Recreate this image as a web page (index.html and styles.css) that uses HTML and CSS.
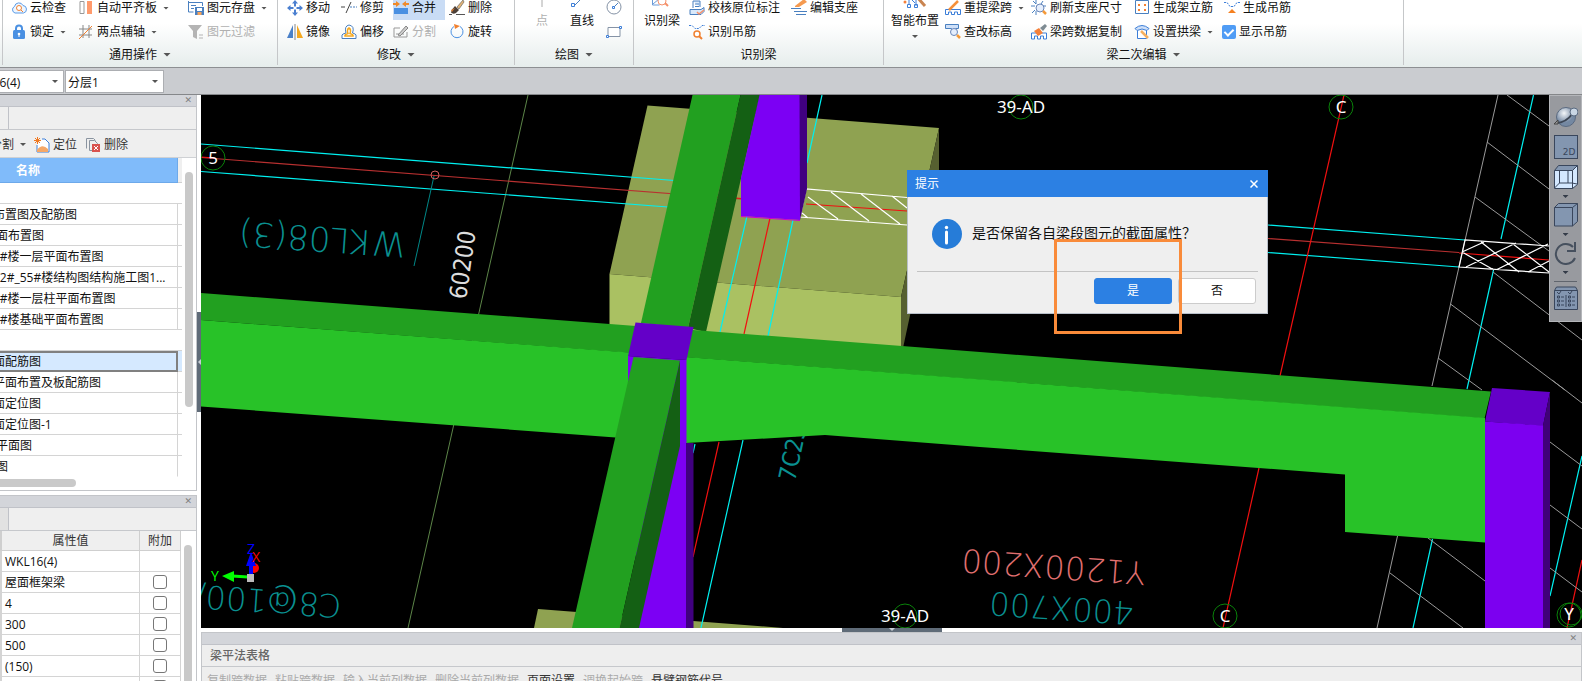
FILE: index.html
```html
<!DOCTYPE html>
<html lang="zh-CN">
<head>
<meta charset="utf-8">
<title>梁二次编辑</title>
<link rel="stylesheet" href="styles.css">
</head>
<body>
<header class="ribbon">
  <section class="group group-common">
    <div class="tools">
      <button class="tool"><svg class="ico" viewBox="0 0 16 16"><path d="M4 13a3.500 3.500 0 0 1-.5-6.500A4.500 4.500 0 0 1 12 5.500a3.800 3.800 0 0 1 .5 7.500z" fill="#eef6ff" stroke="#5b9be6"/><circle cx="8" cy="8" r="2.500" fill="#fff" stroke="#f08030"/><path d="m10 10 2 2" stroke="#f08030"/></svg>云检查</button>
      <button class="tool"><svg class="ico" viewBox="0 0 16 16"><path d="M2 1.500h4v12H2z" fill="#fff" stroke="#999"/><path d="M9 1h5v13H9z" fill="#ff9a6c"/></svg>自动平齐板<i class="caret"></i></button>
      <button class="tool"><svg class="ico" viewBox="0 0 16 16"><path d="M.5 1v11h5M.5 2.500h14V6M3 5.500h5M3 8.500h3" fill="none" stroke="#4a80c0"/><path d="M7 7h9v8H7z" fill="#4a80c0"/><path d="M9 8h5v3H9z" fill="#fff"/><path d="M9.500 12h4v3h-4z" fill="#f5a25a"/></svg>图元存盘<i class="caret"></i></button>
      <button class="tool"><svg class="ico" viewBox="0 0 16 16"><path d="M5 8V4.500a3 3 0 0 1 6 0V8" fill="none" stroke="#4a90e2" stroke-width="2"/><rect x="2" y="6" width="12" height="9" rx="1.500" fill="#4a90e2"/><circle cx="8" cy="10" r="1.300" fill="#fff"/><path d="M8 10v3" stroke="#fff"/></svg>锁定<i class="caret"></i></button>
      <button class="tool"><svg class="ico" viewBox="0 0 16 16"><path d="M1 5h13M1 11h13M5 1v13M11 1v13" stroke="#888"/><path d="m1 15 13-13" stroke="#f08030"/></svg>两点辅轴<i class="caret"></i></button>
      <button class="tool" disabled><svg class="ico" viewBox="0 0 16 16"><path d="M0 1h14L9 7v8l-4-2V7z" fill="#b4b4b4"/><path d="M11 11h4M11 14h4" stroke="#b4b4b4"/></svg>图元过滤</button>
    </div>
    <h2>通用操作<i class="caret wide"></i></h2>
  </section>
  <section class="group group-modify">
    <div class="tools">
      <button class="tool"><svg class="ico" viewBox="0 0 16 16"><path d="m8 0 3 3.500H9v3H7v-3H5zM8 16l3-3.500H9v-3H7v3H5zM0 8l3.500-3v2h3v2h-3v2zM16 8l-3.500-3v2h-3v2h3v2z" fill="#4a7fd0"/></svg>移动</button>
      <button class="tool"><svg class="ico" viewBox="0 0 16 16"><path d="M0 7h4M5 13l5-11" stroke="#444"/><path d="M9 7h2m1 0h2m1 0h1" stroke="#4a80c0"/></svg>修剪</button>
      <button class="tool active"><svg class="ico" viewBox="0 0 16 16"><path d="M1 8h14v6H1z" fill="#4a90e2"/><path d="M0 3h3V1l4 3-4 3V5H0zM16 3h-3V1L9 4l4 3V5h3z" fill="#f08a2a"/></svg>合并</button>
      <button class="tool"><svg class="ico" viewBox="0 0 16 16"><path d="M14 0 8 7l2 2 5-7z" fill="#e2b478" stroke="#555" stroke-width=".6"/><path d="M3 9.500 6 6l4 4-3 3q-3 1.500-5-.5z" fill="#4c4038"/><path d="m2 10 4-2-3 4z" fill="#d67b32"/><path d="M0 14.500h3M7 14.500h9" stroke="#555"/></svg>删除</button>
      <button class="tool"><svg class="ico" viewBox="0 0 16 16"><path d="M6 1v13H0z" fill="#4a80c8"/><path d="M10 1v13h6z" fill="#f5a81e"/><path d="M8 0v16" stroke="#888"/></svg>镜像</button>
      <button class="tool"><svg class="ico" viewBox="0 0 16 16"><path d="M1 14.500V11q0-1 4-2-2-7 3-8 6 1 3.500 8Q15 10 15 11v3.500z" fill="#fff" stroke="#4a80c0"/><path d="M4 12v-1q0-.5 3-1.500-1.500-4 1-5.500 2.500 1.500 1 5.500 3 1 3 1.500v1z" fill="#fff" stroke="#f5a81e" stroke-width="1.500"/></svg>偏移</button>
      <button class="tool" disabled><svg class="ico" viewBox="0 0 16 16"><path d="M1 4v9h13V8M1 4h6M3 10h3m2 0h3" fill="none" stroke="#999"/><path d="m5 11 8-9 2 2-8 8z" fill="#ccc" stroke="#888"/></svg>分割</button>
      <button class="tool"><svg class="ico" viewBox="0 0 16 16"><path d="M5 2.500a6 6 0 1 0 6 0" fill="none" stroke="#4a90e2"/><path d="m5 0 6 2-5 3z" fill="#f08030"/></svg>旋转</button>
    </div>
    <h2>修改<i class="caret wide"></i></h2>
  </section>
  <section class="group group-draw">
    <div class="tools">
      <button class="big" disabled><svg class="bigico" viewBox="0 0 24 24"><path d="M12 4v14" stroke="#aaa"/></svg>点</button>
      <button class="big"><svg class="bigico" viewBox="0 0 24 24"><path d="m5 16 12-12" stroke="#4a80c0"/><path d="M1.500 14.500h3v3h-3z" fill="#fff" stroke="#3c7ed8"/></svg>直线</button>
      <div class="stack">
        <button class="tool" aria-label="圆"><svg class="ico" viewBox="0 0 16 16"><circle cx="8" cy="7" r="7" fill="none" stroke="#8593a6"/><path d="m8 7 4-4" stroke="#4a80c0"/><path d="M6.500 6.500h2v2h-2z" fill="#fff" stroke="#3c7ed8"/></svg></button>
        <button class="tool" aria-label="矩形"><svg class="ico" viewBox="0 0 16 16"><path d="M2 3.500h12v9H2z" fill="#fff" stroke="#8593a6"/><path d="M.5 11.500h2v2h-2zM13.500 2.500h2v2h-2z" fill="#fff" stroke="#3c7ed8"/></svg></button>
      </div>
    </div>
    <h2>绘图<i class="caret wide"></i></h2>
  </section>
  <section class="group group-detect">
    <div class="tools">
      <button class="big"><svg class="bigico" viewBox="0 0 24 24"><path d="M2.500 2v14h7" fill="none" stroke="#6a9ad8"/><path d="m3 15 6-5" stroke="#6a9ad8"/><circle cx="12" cy="12" r="4" fill="#fff" stroke="#f5906a"/><path d="m15 14 3 3" stroke="#f5906a" stroke-width="2"/></svg>识别梁</button>
      <div class="pairs">
        <button class="tool"><svg class="ico" viewBox="0 0 16 16"><path d="M4 1h7v6M4 1v7M6 4h4M6 6.500h4M1 9.500h11l3-2v4l-3 3H1z" fill="#d9e9fb" stroke="#4a80c0"/><path d="m8 12 2 2 5-4" fill="none" stroke="#f5906a" stroke-width="1.500"/></svg>校核原位标注</button>
        <button class="tool"><svg class="ico" viewBox="0 0 16 16"><path d="M0 8.500h10M3 11.500h13M5 14.500h10" stroke="#4a80c0"/><path d="m4 6 9-7 3 3-8 5H4z" fill="#f59a50"/></svg>编辑支座</button>
        <button class="tool"><svg class="ico" viewBox="0 0 16 16"><path d="M0 1.500h3l3 3h4l3-3h3" fill="none" stroke="#3c7ed8" stroke-dasharray="2 1"/><circle cx="8" cy="10" r="3" fill="#fff" stroke="#f08030" stroke-width="1.500"/><path d="m10 12 3 3" stroke="#f08030" stroke-width="2"/></svg>识别吊筋</button>
      </div>
    </div>
    <h2>识别梁</h2>
  </section>
  <section class="group group-beam">
    <div class="tools">
      <button class="big with-caret"><svg class="bigico" viewBox="0 0 24 24"><path d="M6 7v9M13 9v8M4.500 15.500h3v3h-3zM11.500 15.500h3v3h-3zM6 8l6 6" fill="none" stroke="#3c7ed8"/><path d="m14 8 8 9" stroke="#c98450" stroke-width="3"/><circle cx="2" cy="13" r="1.500" fill="#f5803a"/></svg>智能布置<i class="caret"></i></button>
      <div class="pairs">
        <button class="tool"><svg class="ico" viewBox="0 0 16 16"><path d="M.5 14.500V9.500h15v5h-3v-2.500h-3v2.500h-3v-2.500h-3v2.500z" fill="#fff" stroke="#3c7ed8"/><path d="m4 10 9-9" stroke="#f5903a" stroke-width="2.500"/></svg>重提梁跨<i class="caret"></i></button>
        <button class="tool"><svg class="ico" viewBox="0 0 16 16"><path d="M2 1l3 3M12 1l-2 3M0 6h4M1 13l3-3M5 0v4M5 15v-4M12 6h3" stroke="#4a80c0"/><circle cx="9" cy="8" r="4" fill="#e5eefc" stroke="#6a86b8"/><path d="m12 11 3 3" stroke="#f59a3a" stroke-width="2.500"/></svg>刷新支座尺寸</button>
        <button class="tool"><svg class="ico" viewBox="0 0 16 16"><path d="M1.500.5h13v13h-13z" fill="#fff" stroke="#4a80c0"/><path d="M4 4h2v2H4zM10 4h2v2h-2zM4 9h2v2H4zM10 9h2v2h-2z" fill="#f58030"/></svg>生成架立筋</button>
        <button class="tool"><svg class="ico" viewBox="0 0 16 16"><path d="M0 2.500h3l3 4h4l3-4h3" fill="none" stroke="#3c7ed8" stroke-dasharray="2 1"/><path d="m8 9 4 4H4z" fill="#f58020"/></svg>生成吊筋</button>
        <button class="tool"><svg class="ico" viewBox="0 0 16 16"><path d="M.5 0.500h13v4h-3v6l-4-2v-4h-6z" fill="#cfe0f8" stroke="#4a80c0"/><circle cx="9" cy="8" r="3.500" fill="#e5eefc" stroke="#6a86b8"/><path d="m12 11 3 3" stroke="#f59a3a" stroke-width="2.500"/></svg>查改标高</button>
        <button class="tool"><svg class="ico" viewBox="0 0 16 16"><path d="M.5 15v-6h15v6h-3v-3h-3v3h-3v-3h-3v3z" fill="#fff" stroke="#3c7ed8"/><path d="m3 7 5-3 4 5-5 3z" fill="#f5803a"/><path d="m9 4 5-4 2 2-4 5z" fill="#7e8b93"/></svg>梁跨数据复制</button>
        <button class="tool"><svg class="ico" viewBox="0 0 16 16"><path d="M1 4.500q7-6 14 0l-2 2q-5-3-10 0z" fill="#cfe0f8" stroke="#3c7ed8"/><path d="M3.500 7v7.500h9V7" fill="#fff" stroke="#3c7ed8"/><path d="m7 7 7 7" stroke="#f5b060" stroke-width="2.500"/></svg>设置拱梁<i class="caret"></i></button>
        <label class="tool check"><input type="checkbox" checked>显示吊筋</label>
      </div>
    </div>
    <h2>梁二次编辑<i class="caret wide"></i></h2>
  </section>
</header>

<div class="optionbar">
  <span class="combo combo-name"><select aria-label="构件"><option>WKL16(4)</option></select><i class="caret"></i></span>
  <span class="combo combo-layer"><select aria-label="分层"><option>分层1</option></select><i class="caret"></i></span>
</div>

<main class="work">
  <aside class="side">
    <section class="panel drawings">
      <div class="strip"><button aria-label="关闭">✕</button></div>
      <div class="tabrow"><span class="tab"></span></div>
      <div class="panel-tools">
        <button class="cut">分割<i class="caret"></i></button>
        <button><svg class="ico" viewBox="0 0 16 16"><path d="M3 8v7h12V6l-4-4H8" fill="#fff" stroke="#3c7ed8"/><path d="M3 13q5-7 11-1v3H3z" fill="#f5a868"/><path d="M3.500 0v7M0 3.500h7M1 1l5 5M6 1 1 6" stroke="#f07820"/></svg>定位</button>
        <button><svg class="ico" viewBox="0 0 16 16"><path d="M1.500 11.500v-10h7l2 2M4.500 13.500v-10h5l3 3v2M4.500 13.500h3" fill="none" stroke="#8a94a0"/><path d="M7 7h8v8H7z" fill="#d9534f"/><path d="m9 9 4 4m0-4-4 4" stroke="#fff"/></svg>删除</button>
      </div>
      <div class="scrollbox">
        <table class="names">
          <thead><tr><th>名称</th><td></td></tr></thead>
          <tbody>
            <tr class="blank"><td colspan="2"></td></tr>
            <tr><td>布置图及配筋图</td><td></td></tr>
            <tr><td class="in">面布置图</td><td></td></tr>
            <tr><td>4#楼一层平面布置图</td><td></td></tr>
            <tr><td>52#_55#楼结构图结构施工图1...</td><td></td></tr>
            <tr><td>4#楼一层柱平面布置图</td><td></td></tr>
            <tr><td>4#楼基础平面布置图</td><td></td></tr>
            <tr class="blank"><td colspan="2"></td></tr>
            <tr class="selected"><td>面配筋图</td><td></td></tr>
            <tr><td>平面布置及板配筋图</td><td></td></tr>
            <tr><td>面定位图</td><td></td></tr>
            <tr><td>面定位图-1</td><td></td></tr>
            <tr><td class="in">平面图</td><td></td></tr>
            <tr><td class="in">图</td><td></td></tr>
          </tbody>
        </table>
        <div class="vtrack"><i></i></div>
      </div>
      <div class="htrack"><i></i></div>
    </section>
    <section class="panel props">
      <div class="strip"><button aria-label="关闭">✕</button></div>
      <div class="tabrow"><span class="tab gray"></span></div>
      <div class="scrollbox">
        <table class="values">
          <thead><tr><th>属性值</th><th>附加</th></tr></thead>
          <tbody>
            <tr><td>WKL16(4)</td><td></td></tr>
            <tr><td>屋面框架梁</td><td><input type="checkbox" aria-label="附加 屋面框架梁"></td></tr>
            <tr><td>4</td><td><input type="checkbox" aria-label="附加 4"></td></tr>
            <tr><td>300</td><td><input type="checkbox" aria-label="附加 300"></td></tr>
            <tr><td>500</td><td><input type="checkbox" aria-label="附加 500"></td></tr>
            <tr><td>(150)</td><td><input type="checkbox" aria-label="附加 (150)"></td></tr>
            <tr><td></td><td><input type="checkbox" aria-label="附加"></td></tr>
          </tbody>
        </table>
        <div class="vtrack"><i></i></div>
      </div>
    </section>
  </aside>
  <div class="vsplit"><button aria-label="收起"></button></div>
  <div class="center">
    <div class="viewport">
      <svg class="scene" viewBox="201 95 1381 533" preserveAspectRatio="xMinYMin slice">
        <path d="M647.500 105.500 939 128 901 297 609.500 274z" fill="#8fa251"/>
        <path d="M609.500 274 901 297v51l-291.500-20z" fill="#aac162"/>
        <path d="M939 128v52l-36 168h-2v-51z" fill="#566030"/>
        <path d="m538 609 245 19H534z" fill="#8fa251"/>
        <path d="m528 95-120 533" stroke="#5c8548"/>
        <g stroke="#00f0f0" fill="none" stroke-width="1.200">
          <path d="m201 144 480 37M201 171.500l467 35.500M1268 225l197 15M1268 252.500l191 14.500"/>
          <path d="m822 95-15 68M747 216l-27 116M793 220l-25 116M743 440l-42 188M695 444l-2 9"/>
          <path d="m1533.500 95-32.500 144M1493.500 270l-26.500 119M1432.500 539 1413 628M1582 456l-32 140"/>
        </g>
        <g stroke="#b83030" fill="none" stroke-width="1.200"><path d="m201 157.500 540 41.500M1268 238.500l191 14"/></g>
        <g stroke="#f01010" fill="none" stroke-width="1.200">
          <path d="m201 157 14 1M736 198l5 .5M806 204l101 7M770 218l-26 116M719 442l-26 115M1344 95l-64 281M1259 468l-36 160M1459 253l90 7M1582 560l-15 68"/>
        </g>
        <g stroke="#999" fill="none">
          <path d="m1498 95-66 291M1397.500 536 1377 628M1507 95l42 31M1487 142l62 47M1475 197l74 54M1493 272l89 68M1450.500 304 1565 390M1438 358l44 32M1552 380l30 23M1550 442l32 24M1550 505l32 24M1550 568l32 24M1428 538l57 43M1390 573l73 55"/>
        </g>
        <g stroke="#fff" fill="none" stroke-width="1.200">
          <path d="m907 197.500-101-8.500-6 28 107 8M802 213l6 5M808 197l30 22M831 192l38 29M861 194l39 30M892 196l15 12"/>
          <path d="m1549 246-84-6-6 27 90 6M1462 252l32 18M1481 242l38 30M1513 244l36 28M1462 252l22-10M1466 267l50-24M1496 270l52-26M1528 272l21-11"/>
        </g>
        <g class="cad teal">
          <text transform="translate(406 233) rotate(184)">WKL08(3)</text>
          <path d="m434 176-20 90" stroke="#088" fill="none"/>
          <text class="small" transform="translate(342 595) rotate(184)">C8@100/</text>
          <text class="narrow" transform="translate(795 482) rotate(-78)">7C25</text>
          <text class="small" transform="translate(1134 602) rotate(184)">400X700</text>
        </g>
        <text class="cad small pink" transform="translate(1146 562) rotate(184)">Y1200X200</text>
        <text class="cad narrow white" transform="translate(466 300) rotate(-82)">60200</text>
        <path d="M692.500 95h48L688 328l-47-5z" fill="#22a020"/>
        <path d="M740.500 95H760l-54 237-18-4z" fill="#146014"/>
        <path d="M759.500 95H800v125l-59-4v-38z" fill="#7c00f4"/>
        <path d="M799.500 95h7.500v94l-7 31z" fill="#400080"/>
        <path d="m741 216.500 59 4" stroke="#d000d0"/>
        <path d="m201 293 435 33 57.500 4L980 352l511 39.500-6.500 27L201 320z" fill="#22a020"/>
        <path d="m201 320 428 32.500v86L201 406.500zM686 357l799 61v124.500L1345 532v-57.500L980 447l-155-12-139 8z" fill="#28c228"/>
        <path d="m635.500 322.500 58 4.500-7 33-58.500-4z" fill="#6400c8"/>
        <path d="M628 356l58.500 4v268H639l-11-240z" fill="#7c00f4"/>
        <path d="M686 443h7.500v185H686z" fill="#400080"/>
        <path d="m633.500 357 46.500 3.500-60.500 267.500H572z" fill="#22a020"/>
        <path d="M680 360.500V446l-41 182h-19.500z" fill="#146014"/>
        <path d="m1492 388 58 4-7 34-58-4.500z" fill="#6400c8"/>
        <path d="m1485 421.500 58 4V628h-58z" fill="#7c00f0"/>
        <path d="M1550 392v236h-7V425.500z" fill="#400078"/>
        <circle cx="435" cy="175" r="4" fill="none" stroke="#d06060"/>
        <g fill="none" stroke="#0a820a">
          <circle cx="213" cy="158" r="12"/><circle cx="1021" cy="107" r="12"/><circle cx="1341" cy="107" r="12"/><circle cx="905" cy="616" r="12"/><circle cx="1225" cy="616" r="12"/><circle cx="1569" cy="615" r="12"/><circle cx="1571" cy="614" r="11"/>
        </g>
        <g class="axis">
          <text x="213" y="164">5</text><text x="1021" y="113">39-AD</text><text x="1341" y="113">C</text><text x="905" y="622">39-AD</text><text x="1225" y="622">C</text><text x="1569" y="620">Y</text>
        </g>
        <circle cx="254" cy="568" r="5" fill="#f00"/>
        <path d="M251 576v-18" stroke="#00f" stroke-width="4"/><path d="m251 552 5 14h-10z" fill="#00f"/>
        <path d="m248 577-16-1" stroke="#0f0" stroke-width="3"/><path d="m222 576 12-5v11z" fill="#0f0"/>
        <path d="M247 574h7v8h-7z" fill="#bbb"/>
        <g class="gizmo"><text x="247" y="554" fill="#00f">Z</text><text x="252" y="562" fill="#f00">X</text><text x="211" y="581" fill="#0f0">Y</text></g>
      </svg>

      <nav class="viewbar">
        <button aria-label="动态观察"><svg viewBox="0 0 24 24"><defs><radialGradient id="ball" cx=".4" cy=".3"><stop offset="0" stop-color="#f4f7fa"/><stop offset="1" stop-color="#7488a2"/></radialGradient></defs><circle cx="12" cy="12" r="9.500" fill="url(#ball)" stroke="#5a6a80"/><path d="M2 18q10 0 17-10" fill="none" stroke="#3c4654" stroke-width="2"/><circle cx="20" cy="7" r="4" fill="#c9d6e4" stroke="#5a6a80"/><path d="m0 19 4-4v4z" fill="#999" stroke="#444"/></svg></button>
        <button class="twod">2D</button>
        <button aria-label="轴测"><svg viewBox="0 0 24 24"><path d="M.5 5.500h18v18H.5z" fill="#d4e8ff"/><path d="m.5 5.500 4-5h19l-5 5z" fill="#8396b0"/><path d="m18.500 5.500 5-5v19l-5 4z" fill="#d4e8ff"/><path d="M.5 5.500h18v18H.5zM.5 5.500l4-5h19l-5 5M23.500.500v19l-5 4M5.500 6v12h13M5.500 18l-5 5M18 18l5 1M14 6v12" fill="none" stroke="#39465c"/></svg></button>
        <i class="caret"></i>
        <button aria-label="着色"><svg viewBox="0 0 24 24"><path d="m.5 4.500 4-4h19v18l-5 4.500H.5z" fill="#8396b0" stroke="#39465c"/><path d="M.5 4.500h18V23M18.500 4.500l5-4" fill="none" stroke="#39465c"/></svg></button>
        <i class="caret"></i>
        <button aria-label="旋转"><svg viewBox="0 0 24 24"><path d="M19 6A10 10 0 1 0 21 17" fill="none" stroke="#46505e" stroke-width="2"/><path d="M21 1v9h-8" fill="none" stroke="#46505e" stroke-width="2"/></svg></button>
        <i class="caret"></i>
        <hr>
        <button aria-label="显示设置"><svg viewBox="0 0 24 24"><path d="M.5 4.500 2.500 1h19l2 3.500v19H.5z" fill="#8396b0" stroke="#39465c"/><path d="M.5 4.500h23M12 9v12M7 11h3M7 15h3M7 19h3M18 11h3M18 15h3M18 19h3" stroke="#39465c"/><path d="m3 6 2 2 2-3M14 6l2 2 2-3M3.500 10h2v2h-2zM3.500 14h2v2h-2zM3.500 18h2v2h-2zM14.500 10h2v2h-2zM14.500 14h2v2h-2zM14.500 18h2v2h-2z" fill="none" stroke="#39465c"/></svg></button>
      </nav>

      <div class="dialog" role="dialog" aria-labelledby="dlg-title">
        <div class="dialog-title"><span id="dlg-title">提示</span><button aria-label="关闭"><svg viewBox="0 0 8 8"><path d="m.5.5 7 7m0-7-7 7" stroke="#fff" stroke-width="1.500"/></svg></button></div>
        <div class="dialog-body">
          <svg class="info" viewBox="0 0 30 30"><circle cx="15" cy="15" r="15" fill="#267cd8"/><circle cx="14.500" cy="8.500" r="1.700" fill="#fff"/><path d="M14.500 13v11" stroke="#fff" stroke-width="3" stroke-linecap="round"/></svg>
          <p>是否保留各自梁段图元的截面属性？</p>
        </div>
        <div class="dialog-actions"><button class="primary">是</button><button>否</button></div>
      </div>
      <div class="marker"></div>
    </div>
    <div class="hsplit"><button aria-label="收起"></button></div>
    <section class="bottom">
      <div class="strip"><button aria-label="关闭">✕</button></div>
      <h3>梁平法表格</h3>
      <div class="cmds"><button disabled>复制跨数据</button><button disabled>粘贴跨数据</button><button disabled>输入当前列数据</button><button disabled>删除当前列数据</button><button>页面设置</button><button disabled>调换起始跨</button><button>悬臂钢筋代号</button></div>
    </section>
  </div>
</main>
</body>
</html>
```
FILE: styles.css
```css
* { box-sizing: border-box; }
body {
  margin: 0;
  height: 100vh;
  display: flex;
  flex-direction: column;
  overflow: hidden;
  background: #fff;
  color: #111;
  font: 12px/16px "Open Sans", "Noto Sans CJK SC", sans-serif;
}
button, select, input { font: inherit; color: inherit; margin: 0; }
button { border: 0; padding: 0; background: none; white-space: nowrap; }
h2, h3, p { margin: 0; font-size: 12px; font-weight: 400; }
.caret {
  flex: none;
  width: 6px;
  height: 3px;
  background: #555;
  clip-path: polygon(0 0, 100% 0, 50% 100%);
}
.caret.wide { width: 8px; height: 4px; }

/* ribbon */
.ribbon {
  flex: none;
  display: flex;
  height: 68px;
  overflow: hidden;
  background: linear-gradient(#fff 35%, #e6edec);
  border-bottom: 1px solid #8d8f92;
  padding-left: 2px;
}
.group {
  flex: none;
  height: 65px;
  display: flex;
  flex-direction: column;
  justify-content: flex-end;
  border-right: 1px solid #c5c7c9;
}
.ribbon .group:first-child { border-left: 1px solid #c5c7c9; }
.group h2 {
  height: 21px;
  line-height: 21px;
  display: flex;
  align-items: center;
  justify-content: center;
  gap: 6px;
}
.tools { height: 48px; }
.tool { display: flex; align-items: center; height: 24px; gap: 3px; }
.tool .caret { margin-left: 3px; }
.ico { flex: none; width: 16px; height: 16px; display: block; }
.tool:disabled, .big:disabled { color: #b0b0b0; }
.big { display: flex; flex-direction: column; align-items: center; height: 48px; }
.bigico { flex: none; width: 24px; height: 24px; display: block; margin-top: -7px; }
.big .caret { margin-top: 6px; }
.group-common { width: 276px; }
.group-common .tools { display: grid; grid-template-columns: 67px 110px auto; padding-left: 8px; }
.group-modify { width: 237px; }
.group-modify .tools { display: grid; grid-template-columns: 54px 52px 56px auto; padding-left: 9px; }
.active { background: #c9dcf5; margin-right: 4px; }
.group-draw { width: 119px; }
.group-draw .tools { display: flex; gap: 12px; padding-left: 15px; }
.group-draw .big { width: 24px; }
.group-draw .big + .big { margin-left: 4px; }
.group-detect { width: 250px; }
.group-detect .tools { display: flex; gap: 9px; padding-left: 10px; }
.group-detect .pairs { display: grid; grid-template-columns: 102px auto; }
.group-beam { width: 520px; }
.group-beam .tools { display: flex; gap: 6px; padding-left: 7px; }
.group-beam .pairs { display: grid; grid-template-columns: 86px 103px 90px auto; }
.check input {
  appearance: none;
  width: 14px;
  height: 14px;
  margin-left: -2px;
  border-radius: 2px;
  background: #4f9cf5;
  display: grid;
  place-items: center;
}
.check input:checked::after {
  content: "";
  width: 4px;
  height: 7px;
  margin-bottom: 2px;
  border: solid #fff;
  border-width: 0 2px 2px 0;
  transform: rotate(45deg);
}

/* option bar */
.optionbar {
  flex: none;
  display: flex;
  gap: 1px;
  height: 27px;
  padding: 2px 0;
  background: #caccd0;
  border-bottom: 1px solid #85878a;
}
.combo { position: relative; height: 23px; background: #fff; border: 1px solid #acaeb2; }
.combo select {
  appearance: none;
  width: 100%;
  height: 21px;
  border: 0;
  background: none;
  padding: 2px 2px 0;
}
.combo .caret { position: absolute; right: 5px; top: 9px; }
.combo-name { width: 99px; margin-left: -35px; }
.combo-layer { width: 99px; }

/* workspace */
.work { flex: 1; min-height: 0; display: grid; grid-template-columns: 197px 4px minmax(0, 1fr); }
.side { display: flex; flex-direction: column; gap: 4px; overflow: hidden; min-height: 0; }
.panel { border-right: 1px solid #c3c5c9; overflow: hidden; flex: none; }
.drawings { border-bottom: 1px solid #c3c5c9; }
.props { border-top: 1px solid #c3c5c9; }
.strip {
  height: 12px;
  background: #d3d5da;
  border-bottom: 1px solid #c0c2c8;
  display: flex;
  justify-content: flex-end;
  align-items: center;
  padding-right: 4px;
}
.strip button { font: bold 9px/11px "DejaVu Sans", sans-serif; color: #808080; }
.tabrow { height: 23px; background: #efefef; border-bottom: 1px solid #c6c8cc; display: flex; }
.tab { width: 9px; border-right: 1px solid #c0c2c8; }
.tab.gray { background: #e2e2e2; }
.panel-tools {
  height: 28px;
  padding-top: 2px;
  display: flex;
  align-items: center;
  gap: 8px;
  background: #efefef;
  border-bottom: 1px solid #cfd1d4;
  color: #333;
}
.panel-tools button { display: flex; align-items: center; gap: 3px; }
.panel-tools .cut { margin-left: -10px; gap: 6px; }
.scrollbox { display: flex; align-items: flex-start; }
table { border-collapse: separate; border-spacing: 0; table-layout: fixed; }
.names { width: 182px; }
.names th { width: 178px; height: 25px; background: #80bbfa; color: #fff; font-weight: 700; text-align: left; padding: 1px 0 0 16px; border: 1px solid #6da9ea; border-width: 0 1px 1px 0; }
.names thead td { background: #efefef; border-bottom: 1px solid #d0d0d0; }
.names tbody td { height: 21px; padding: 2px 0 0; border: solid #d4d4d4; border-width: 0 0 1px; white-space: nowrap; overflow: hidden; text-indent: -7px; }
.names tbody td:first-child:not([colspan]) { border-right-width: 1px; }
.names tbody td.in { text-indent: -4px; }
.names tbody tr:last-child td { border-bottom-color: transparent; }
.names .selected td { background: #d5e9ff; }
.names .selected td:first-child { box-shadow: inset 0 2px #808080, inset 0 -1px #808080, inset -1px 0 #808080; border-color: #808080; }
.vtrack { flex: 1; padding: 14px 0 0 3px; }
.vtrack i { display: block; width: 8px; height: 235px; border-radius: 4px; background: #c9c9c9; }
.htrack { height: 13px; padding-top: 2px; }
.htrack i { display: block; width: 80px; height: 8px; margin-left: -4px; border-radius: 4px; background: #c9c9c9; }
.values { width: 181px; }
.values th { height: 20px; padding: 1px 0 0; background: #efefef; font-weight: 400; color: #333; border: solid #cfcfcf; border-width: 0 1px 1px 0; }
.values th:first-child { width: 140px; border-left: 2px solid #cfcfcf; }
.values td { height: 21px; padding: 1px 0 0 3px; border: solid #d4d4d4; border-width: 0 1px 1px 0; }
.values td:first-child { border-left: 2px solid #d4d4d4; }
.values td:last-child { padding: 0; text-align: center; }
.values input { appearance: none; width: 14px; height: 14px; border: 1px solid #777; border-radius: 3px; background: #fff; display: block; margin: 0 auto; }
.vsplit { display: flex; align-items: flex-start; padding-top: 217px; }
.vsplit button { width: 4px; height: 100px; background: #5f6b78; position: relative; }
.vsplit button::after { content: ""; position: absolute; right: 0; top: 47px; border: 3px solid transparent; border-right-color: #c9cfd6; border-left-width: 0; }

.center { display: flex; flex-direction: column; min-width: 0; min-height: 0; }
.viewport { flex: 1; min-height: 0; position: relative; overflow: hidden; background: #000; }
.scene { position: absolute; inset: 0; width: 100%; height: 100%; display: block; }
.cad, .cad text { font: 200 34px "DejaVu Sans Light", "DejaVu Sans", sans-serif; }
.cad.small, .cad .small { font-size: 32px; }
.cad.narrow, .cad .narrow { font: 24px "Liberation Sans Narrow", "DejaVu Sans Condensed", sans-serif; }
.teal text { fill: #0a9090; }
.pink { fill: #e07070; }
.white { fill: #ddd; }
.axis text { font: 17px "Noto Sans", sans-serif; fill: #fff; text-anchor: middle; }
.gizmo text { font: 14px "Open Sans", sans-serif; }
.hsplit { height: 4px; display: flex; padding-left: 641px; }
.hsplit button { width: 100px; height: 4px; background: #5f6b78; display: flex; justify-content: center; }
.hsplit button::after { content: ""; border: 3px solid transparent; border-top-color: #c9cfd6; border-bottom-width: 0; }
.bottom { height: 49px; overflow: hidden; background: #eee; border: solid #c3c5c9; border-width: 1px 1px 0; }
.bottom h3 { height: 22px; line-height: 22px; padding-left: 8px; color: #666; border-bottom: 1px solid #c6c8cc; font-weight: 500; }
.cmds { display: flex; gap: 8px; padding: 4px 5px 0; }
.cmds button { line-height: 20px; color: #333; }
.cmds button:disabled { color: #aaa; }

/* view toolbar */
.viewbar {
  position: absolute;
  top: 0;
  right: 0;
  width: 33px;
  height: 227px;
  padding-top: 9px;
  display: flex;
  flex-direction: column;
  align-items: center;
  background: #989a9f;
  border: 1px solid #b4b6ba;
}
.viewbar button { width: 24px; height: 24px; flex: none; margin-bottom: 6px; }
.viewbar svg { width: 24px; height: 24px; display: block; }
.viewbar .twod { background: #8396b0; border: 1px solid #39465c; font: 9px/12px "DejaVu Sans", sans-serif; text-align: right; padding: 9px 1px 0 0; color: #39465c; }
.viewbar .caret { background: #333b48; margin-bottom: 5px; }
.viewbar hr { width: 23px; margin: 2px 0 4px; border: 0; border-top: 1px solid #60656d; }

/* dialog */
.dialog {
  position: absolute;
  left: 706px;
  top: 75px;
  width: 361px;
  background: #efefef;
  border: 1px solid #b8bfc9;
  border-top: 0;
}
.dialog-title { height: 27px; margin: 0 -1px; padding: 0 10px 0 8px; display: flex; align-items: center; justify-content: space-between; background: #2c80e3; color: #fff; }
.dialog-title svg { width: 8px; height: 8px; display: block; }
.dialog-body { display: flex; gap: 10px; margin: 0 9px; padding: 22px 15px; border-bottom: 1px solid #c3c3c3; }
.info { flex: none; width: 30px; height: 30px; }
.dialog-body p { font-size: 14px; line-height: 28px; white-space: nowrap; }
.dialog-actions { display: flex; justify-content: flex-end; gap: 6px; padding: 6px 11px 9px; }
.dialog-actions button { width: 78px; height: 26px; border-radius: 3px; background: #fff; border: 1px solid #ccc; }
.dialog-actions .primary { background: #2c80e3; border-color: #2c80e3; color: #fff; }
.marker { position: absolute; left: 853px; top: 144px; width: 128px; height: 95px; border: 3px solid #f98b3a; }
```
